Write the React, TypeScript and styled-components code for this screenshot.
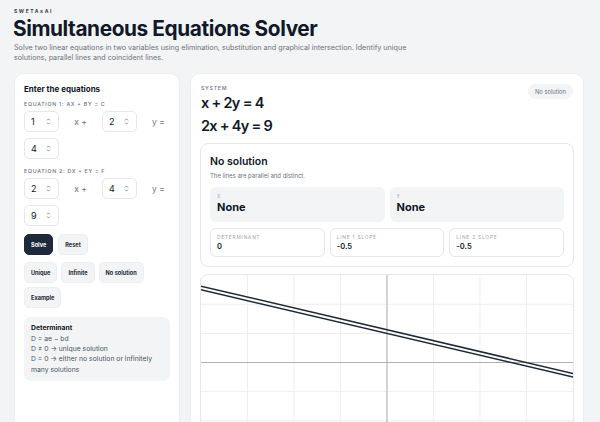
import React from "react";
import styled, { createGlobalStyle } from "styled-components";

const GlobalStyle = createGlobalStyle`
  * { box-sizing: border-box; }
  body {
    margin: 0;
    background: #f3f4f6;
    font-family: Inter, "Noto Sans", "DejaVu Sans", sans-serif;
    color: #111827;
  }
`;

const equations = [
  { label: "Equation 1: ax + by = c", values: [1, 2, 4] },
  { label: "Equation 2: dx + ey = f", values: [2, 4, 9] },
];

const presets = ["Unique", "Infinite", "No solution", "Example"];

const stats = [
  { label: "Determinant", value: "0" },
  { label: "Line 1 slope", value: "-0.5" },
  { label: "Line 2 slope", value: "-0.5" },
];

function Spinner() {
  return (
    <svg width="5" height="9" viewBox="0 0 5 9" fill="none" stroke="#6b7280" strokeWidth="0.8">
      <path d="M1 3.4 L2.5 1.9 L4 3.4" />
      <path d="M1 5.6 L2.5 7.1 L4 5.6" />
    </svg>
  );
}

function NumberField({ value }: { value: number }) {
  return (
    <Field>
      <span>{value}</span>
      <Spinner />
    </Field>
  );
}

const GRAPH_W = 373;
const GRAPH_H = 175;
const RANGE = 6;

function Graph({ lines }: { lines: { m: number; b: number }[] }) {
  const sx = (x: number) => ((x + RANGE) / (2 * RANGE)) * GRAPH_W;
  const sy = (y: number) => ((RANGE - y) / (2 * RANGE)) * GRAPH_H;
  const cols = Array.from({ length: 7 }, (_, i) => ((i + 1) * GRAPH_W) / 8);
  const rows = Array.from({ length: 5 }, (_, i) => ((i + 1) * GRAPH_H) / 6);
  return (
    <svg width="100%" height={GRAPH_H} viewBox={`0 0 ${GRAPH_W} ${GRAPH_H}`} style={{ display: "block" }}>
      {cols.map((x) => (
        <line key={"c" + x} x1={x} x2={x} y1={0} y2={GRAPH_H} stroke="#eceef1" strokeWidth="1" />
      ))}
      {rows.map((y) => (
        <line key={"r" + y} x1={0} x2={GRAPH_W} y1={y} y2={y} stroke="#eceef1" strokeWidth="1" />
      ))}
      <line x1={sx(0)} x2={sx(0)} y1={0} y2={GRAPH_H} stroke="#aeb2b8" strokeWidth="1" />
      <line x1={0} x2={GRAPH_W} y1={sy(0)} y2={sy(0)} stroke="#aeb2b8" strokeWidth="1" />
      {lines.map((l, i) => (
        <line
          key={i}
          x1={sx(-RANGE)}
          y1={sy(l.m * -RANGE + l.b)}
          x2={sx(RANGE)}
          y2={sy(l.m * RANGE + l.b)}
          stroke="#1f2a37"
          strokeWidth="1.5"
        />
      ))}
    </svg>
  );
}

export default function App() {
  return (
    <Page>
      <GlobalStyle />
      <Brand>SWETAxAI</Brand>
      <Title>Simultaneous Equations Solver</Title>
      <Lead>
        Solve two linear equations in two variables using elimination, substitution and graphical
        intersection. Identify unique solutions, parallel lines and coincident lines.
      </Lead>

      <Main>
        <Card>
          <CardHeading>Enter the equations</CardHeading>
          {equations.map((eq) => (
            <EquationBlock key={eq.label}>
              <SmallCaps>{eq.label}</SmallCaps>
              <EquationRow>
                <NumberField value={eq.values[0]} />
                <Operator>x +</Operator>
                <NumberField value={eq.values[1]} />
                <Operator>y =</Operator>
                <NumberField value={eq.values[2]} />
              </EquationRow>
            </EquationBlock>
          ))}
          <ButtonRow>
            <Button $primary>Solve</Button>
            <Button>Reset</Button>
          </ButtonRow>
          <PresetRow>
            {presets.map((p) => (
              <Button key={p}>{p}</Button>
            ))}
          </PresetRow>
          <Note>
            <strong>Determinant</strong>
            <span>D = ae − bd</span>
            <span>D ≠ 0 → unique solution</span>
            <span>D = 0 → either no solution or infinitely many solutions</span>
          </Note>
        </Card>

        <Card>
          <SystemHeader>
            <div>
              <SmallCaps>System</SmallCaps>
              <EquationText>x + 2y = 4</EquationText>
              <EquationText>2x + 4y = 9</EquationText>
            </div>
            <Badge>No solution</Badge>
          </SystemHeader>

          <ResultBox>
            <ResultTitle>No solution</ResultTitle>
            <ResultText>The lines are parallel and distinct.</ResultText>
            <ValueGrid>
              <ValueTile>
                <TinyLabel>x</TinyLabel>
                <BigValue>None</BigValue>
              </ValueTile>
              <ValueTile>
                <TinyLabel>y</TinyLabel>
                <BigValue>None</BigValue>
              </ValueTile>
            </ValueGrid>
            <StatGrid>
              {stats.map((s) => (
                <StatTile key={s.label}>
                  <TinyLabel>{s.label}</TinyLabel>
                  <StatValue>{s.value}</StatValue>
                </StatTile>
              ))}
            </StatGrid>
          </ResultBox>

          <GraphBox>
            <Graph lines={[{ m: -0.5, b: 2 }, { m: -0.5, b: 2.25 }]} />
          </GraphBox>
        </Card>
      </Main>
    </Page>
  );
}

const Page = styled.div`
  padding: 8px 16px 0 14px;
`;

const Brand = styled.div`
  font-size: 5px;
  line-height: 6px;
  font-weight: 700;
  letter-spacing: 1.6px;
  color: #374151;
`;

const Title = styled.h1`
  margin: 3px 0 0 -1px;
  font-size: 20.8px;
  line-height: 24px;
  font-weight: 700;
  letter-spacing: -0.4px;
  color: #111827;
`;

const Lead = styled.p`
  margin: 2px 0 0;
  max-width: 410px;
  font-size: 7.2px;
  line-height: 9.6px;
  color: #6f727a;
`;

const Main = styled.div`
  display: grid;
  grid-template-columns: 166px 1fr;
  gap: 10px;
  margin-top: 11px;
`;

const Card = styled.div`
  background: #fff;
  border: 1px solid #eceef1;
  border-radius: 10px;
  padding: 9px;
  min-height: 380px;
`;

const CardHeading = styled.div`
  font-size: 8px;
  line-height: 12px;
  font-weight: 700;
  color: #111827;
`;

const EquationBlock = styled.div`
  margin-top: 4.5px;
  & + & {
    margin-top: 7.5px;
  }
`;

const SmallCaps = styled.div`
  font-size: 5.3px;
  line-height: 8px;
  font-weight: 500;
  letter-spacing: 0.7px;
  text-transform: uppercase;
  color: #6b7280;
`;

const EquationRow = styled.div`
  display: grid;
  grid-template-columns: repeat(4, 35px);
  column-gap: 4px;
  row-gap: 6px;
  margin-top: 3.5px;
  align-items: center;
`;

const Field = styled.div`
  width: 35px;
  height: 21px;
  border: 1px solid #e5e7eb;
  border-radius: 5px;
  display: flex;
  align-items: center;
  justify-content: space-between;
  padding: 0 7px 0 6px;
  font-size: 9px;
  color: #111827;
`;

const Operator = styled.span`
  font-size: 8.5px;
  color: #6b7280;
  text-align: center;
`;

const ButtonRow = styled.div`
  display: flex;
  gap: 5px;
  margin-top: 8px;
`;

const PresetRow = styled.div`
  display: flex;
  flex-wrap: wrap;
  gap: 4px;
  margin-top: 7px;
`;

const Button = styled.button<{ $primary?: boolean }>`
  height: 21px;
  padding: 0 6px;
  border-radius: 5px;
  border: 1px solid ${(p) => (p.$primary ? "#1e293b" : "#eceef1")};
  background: ${(p) => (p.$primary ? "#1e293b" : "#f3f4f6")};
  color: ${(p) => (p.$primary ? "#fff" : "#1f2937")};
  font-family: inherit;
  font-size: 5.6px;
  font-weight: 700;
`;

const Note = styled.div`
  margin-top: 9px;
  background: #f3f4f6;
  border-radius: 7px;
  padding: 6px 7px;
  display: flex;
  flex-direction: column;
  font-size: 6.8px;
  line-height: 10.4px;
  color: #4b5563;

  strong {
    color: #111827;
    font-weight: 700;
  }
`;

const SystemHeader = styled.div`
  display: flex;
  justify-content: space-between;
  align-items: flex-start;
  padding: 1px 0 0 1px;
`;

const EquationText = styled.div`
  font-size: 14.5px;
  line-height: 22.5px;
  font-weight: 600;
  letter-spacing: -0.7px;
  color: #111827;
  &:first-of-type {
    margin-top: 4px;
  }
`;

const Badge = styled.span`
  height: 15px;
  padding: 0 7px;
  border-radius: 999px;
  background: #f3f4f6;
  font-size: 5.8px;
  line-height: 15px;
  color: #6b7280;
  margin-right: 1px;
`;

const ResultBox = styled.div`
  margin-top: 6px;
  border: 1px solid #e5e7eb;
  border-radius: 8px;
  padding: 11px 9px 9px;
`;

const ResultTitle = styled.div`
  font-size: 10.5px;
  line-height: 14px;
  font-weight: 600;
  color: #111827;
`;

const ResultText = styled.div`
  margin-top: 2px;
  font-size: 6px;
  line-height: 9px;
  color: #6b7280;
`;

const ValueGrid = styled.div`
  display: grid;
  grid-template-columns: 1fr 1fr;
  gap: 5px;
  margin-top: 7px;
`;

const ValueTile = styled.div`
  background: #f3f4f6;
  border-radius: 6px;
  padding: 6px 7px 6px;
  height: 35px;
`;

const TinyLabel = styled.div`
  font-size: 4.8px;
  line-height: 7px;
  letter-spacing: 0.8px;
  text-transform: uppercase;
  color: #9ca3af;
`;

const BigValue = styled.div`
  font-size: 11px;
  line-height: 15px;
  font-weight: 700;
  color: #111827;
`;

const StatGrid = styled.div`
  display: grid;
  grid-template-columns: repeat(3, 1fr);
  gap: 5px;
  margin-top: 6px;
`;

const StatTile = styled.div`
  border: 1px solid #e5e7eb;
  border-radius: 6px;
  padding: 5px 6px;
  height: 29px;
`;

const StatValue = styled.div`
  font-size: 7.5px;
  line-height: 11px;
  font-weight: 600;
  color: #111827;
`;

const GraphBox = styled.div`
  margin-top: 7px;
  border: 1px solid #e5e7eb;
  border-radius: 8px;
  overflow: hidden;
`;
